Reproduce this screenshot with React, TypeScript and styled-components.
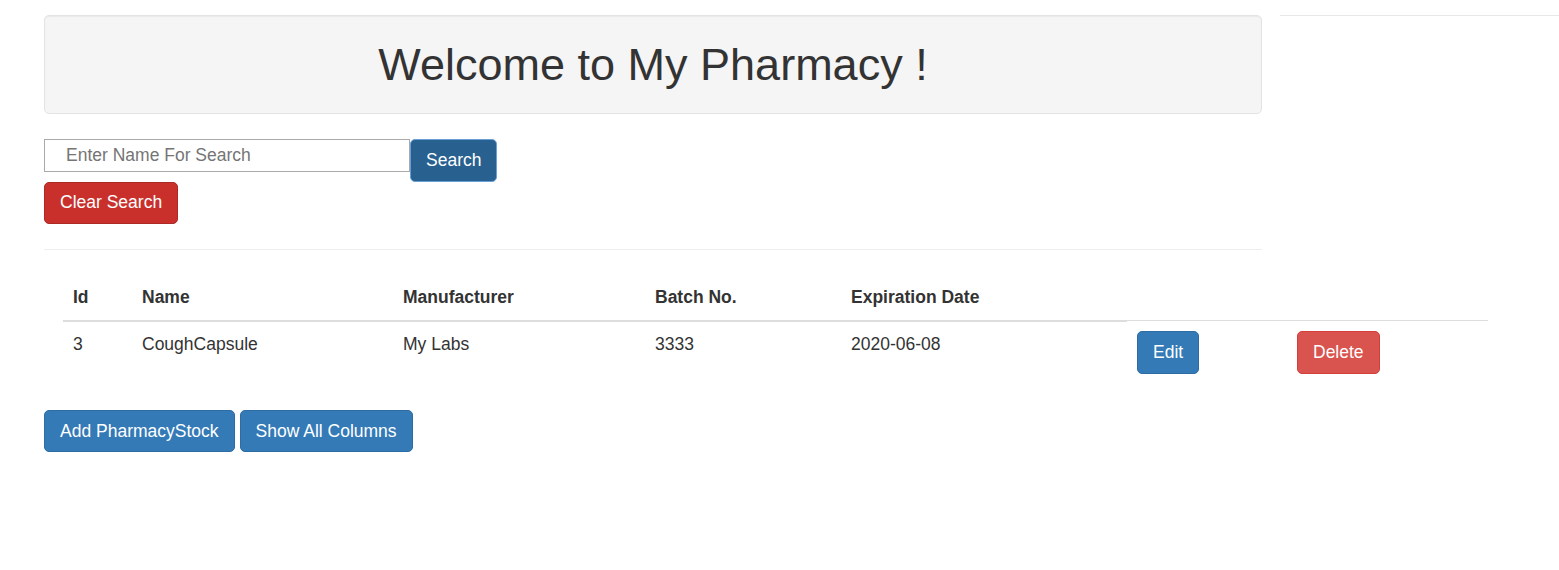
import React from "react";
import styled, { createGlobalStyle } from "styled-components";

const Global = createGlobalStyle`
  html, body { margin: 0; padding: 0; background: #fff; }
  body {
    font-family: "Liberation Sans", Arial, Helvetica, sans-serif;
    font-size: 17.5px;
    line-height: 1.42857;
    color: #333;
  }
  * { box-sizing: border-box; }
`;

const Page = styled.div`
  padding-top: 15px;
`;

const TopRow = styled.div`
  display: flex;
  align-items: flex-start;
`;

const Main = styled.div`
  width: 1218px;
  margin-left: 44px;
`;

const SideRule = styled.div`
  flex: 1;
  margin-left: 18px;
  border-top: 1px solid #e8e8e8;
`;

const Well = styled.div`
  background: #f5f5f5;
  border: 1px solid #e3e3e3;
  border-radius: 5px;
  padding: 24px 19px 23px;
  box-shadow: inset 0 1px 1px rgba(0, 0, 0, 0.05);
`;

const Title = styled.h1`
  margin: 0;
  font-size: 45px;
  font-weight: 500;
  line-height: 1.1;
  text-align: center;
  color: #333;
`;

const SearchRow = styled.div`
  display: flex;
  align-items: flex-start;
  margin-top: 25px;
`;

const SearchInput = styled.input`
  width: 366px;
  height: 33px;
  border: 1px solid #a9a9a9;
  padding: 0 0 0 21px;
  font-family: inherit;
  font-size: 17.5px;
  color: #333;
  outline: none;
  &::placeholder {
    color: #757575;
  }
`;

type Tone = "primary" | "primaryActive" | "danger" | "dangerDark";

const borderOf: Record<Tone, string> = {
  primary: "#2e6da4",
  primaryActive: "#6a9fd6",
  danger: "#d43f3a",
  dangerDark: "#ac2925",
};

const bgOf: Record<Tone, string> = {
  primary: "#337ab7",
  primaryActive: "#286090",
  danger: "#d9534f",
  dangerDark: "#c9302c",
};

const Btn = styled.button<{ $tone: Tone; $tall?: boolean }>`
  display: inline-block;
  font-family: inherit;
  font-size: 17.5px;
  line-height: 25px;
  padding: ${(p) => (p.$tall ? "8px 15px" : "7.5px 15px")};
  border-radius: 5px;
  color: #fff;
  cursor: pointer;
  white-space: nowrap;
  border: 1px solid ${(p) => borderOf[p.$tone]};
  background: ${(p) => bgOf[p.$tone]};
`;

const Block = styled.div`
  display: block;
`;

const Rule = styled.hr`
  margin: 25px 0;
  border: 0;
  border-top: 1px solid #eee;
`;

const TableWrap = styled.div`
  margin-left: 63px;
  width: 1425px;
  margin-bottom: 26px;
`;

const Table = styled.table`
  width: 100%;
  border-collapse: collapse;
  border-spacing: 0;
  table-layout: fixed;
`;

const Col = styled.col<{ $w: number }>`
  width: ${(p) => p.$w}px;
`;

const Th = styled.th`
  text-align: left;
  font-weight: bold;
  padding: 10px;
  line-height: 25px;
  vertical-align: bottom;
  border-bottom: 2px solid #ddd;
`;

const Td = styled.td`
  padding: 10px;
  line-height: 25px;
  vertical-align: top;
  border-top: 1px solid #ddd;
`;

const ButtonRow = styled.div`
  margin-left: 44px;
  display: flex;
  gap: 5px;
`;

const widths = [69, 261, 252, 196, 286, 160, 201];

export default function App() {
  return (
    <>
      <Global />
      <Page>
        <TopRow>
          <Main>
            <Well>
              <Title>Welcome to My Pharmacy !</Title>
            </Well>
            <SearchRow>
              <SearchInput placeholder="Enter Name For Search" />
              <Btn $tone="primaryActive" $tall>
                Search
              </Btn>
            </SearchRow>
            <Block>
              <Btn $tone="dangerDark">Clear Search</Btn>
            </Block>
            <Rule />
          </Main>
          <SideRule />
        </TopRow>
        <TableWrap>
          <Table>
            <colgroup>
              {widths.map((w, i) => (
                <Col key={i} $w={w} />
              ))}
            </colgroup>
            <thead>
              <tr>
                <Th>Id</Th>
                <Th>Name</Th>
                <Th>Manufacturer</Th>
                <Th>Batch No.</Th>
                <Th>Expiration Date</Th>
              </tr>
            </thead>
            <tbody>
              <tr>
                <Td>3</Td>
                <Td>CoughCapsule</Td>
                <Td>My Labs</Td>
                <Td>3333</Td>
                <Td>2020-06-08</Td>
                <Td>
                  <Btn $tone="primary" $tall>
                    Edit
                  </Btn>
                </Td>
                <Td>
                  <Btn $tone="danger" $tall>
                    Delete
                  </Btn>
                </Td>
              </tr>
            </tbody>
          </Table>
        </TableWrap>
        <ButtonRow>
          <Btn $tone="primary">Add PharmacyStock</Btn>
          <Btn $tone="primary">Show All Columns</Btn>
        </ButtonRow>
      </Page>
    </>
  );
}
